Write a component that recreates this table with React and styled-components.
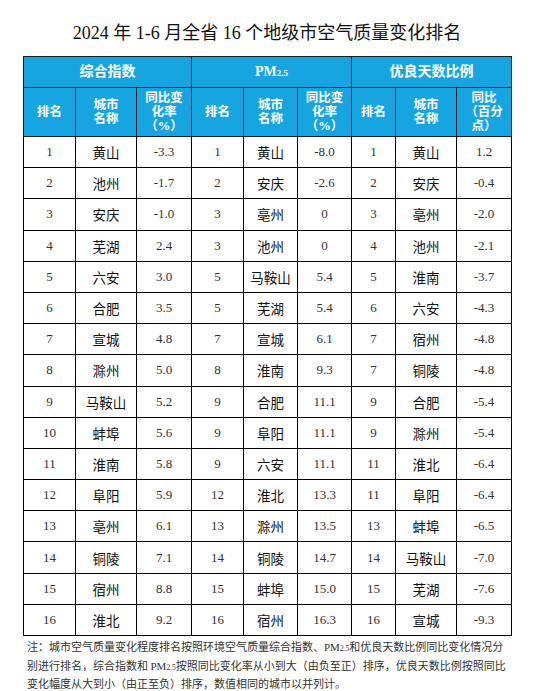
import React from "react";
import styled, { createGlobalStyle } from "styled-components";

const GlobalStyle = createGlobalStyle`
  body {
    margin: 0;
    background: #fff;
    font-family: "Liberation Serif", "Noto Sans CJK SC", serif;
  }
`;

const Page = styled.div`
  width: 537px;
  padding: 21px 0 0 23px;
  box-sizing: border-box;
`;

const Title = styled.h1`
  width: 488px;
  margin: 0 0 11px;
  font-family: "Liberation Serif", "Noto Sans CJK SC", serif;
  font-size: 18px;
  line-height: 24px;
  font-weight: normal;
  color: #111;
  text-align: center;
`;

const Table = styled.table`
  width: 488px;
  border-collapse: collapse;
  table-layout: fixed;
  border: 1px solid #000;
`;

const HeadRow = styled.tr`
  height: ${(p) => p.$h}px;
`;

const Th = styled.th`
  background: #17a5e2;
  color: #fff;
  border: 1px solid #0f1f2a;
  padding: 0;
  font-family: "Liberation Serif", "Noto Sans CJK SC", serif;
  font-weight: bold;
  font-size: ${(p) => (p.$group ? 14 : 12.5)}px;
  line-height: 14px;
  text-align: center;
  vertical-align: middle;
`;

const Sub = styled.span`
  font-size: 9px;
`;

const Row = styled.tr`
  height: 31.2px;
`;

const Td = styled.td`
  border: 1px solid #000;
  padding: 0;
  text-align: center;
  vertical-align: middle;
  color: ${(p) => (p.$city ? "#111" : "#333")};
  font-family: ${(p) =>
    p.$city
      ? '"Noto Sans CJK SC", sans-serif'
      : '"Liberation Serif", "Noto Sans CJK SC", serif'};
  font-size: ${(p) => (p.$city ? 13.5 : 13)}px;
`;

const Note = styled.div`
  display: flex;
  flex-direction: column;
  margin: 1px 0 0 4px;
  font-family: "Noto Sans CJK SC", sans-serif;
  font-size: 11px;
  color: #333;
`;

const NoteLine = styled.div`
  height: 18.5px;
  line-height: 18.5px;
  white-space: nowrap;
`;

const NoteSub = styled.span`
  font-family: "Liberation Serif", serif;
  font-size: 7.5px;
  line-height: 0;
`;

const Pm = styled.span`
  font-family: "Liberation Serif", serif;
  line-height: 0;
`;

const composite = [
  [1, "黄山", "-3.3"], [2, "池州", "-1.7"], [3, "安庆", "-1.0"], [4, "芜湖", "2.4"],
  [5, "六安", "3.0"], [6, "合肥", "3.5"], [7, "宣城", "4.8"], [8, "滁州", "5.0"],
  [9, "马鞍山", "5.2"], [10, "蚌埠", "5.6"], [11, "淮南", "5.8"], [12, "阜阳", "5.9"],
  [13, "亳州", "6.1"], [14, "铜陵", "7.1"], [15, "宿州", "8.8"], [16, "淮北", "9.2"],
];

const pm25 = [
  [1, "黄山", "-8.0"], [2, "安庆", "-2.6"], [3, "亳州", "0"], [3, "池州", "0"],
  [5, "马鞍山", "5.4"], [5, "芜湖", "5.4"], [7, "宣城", "6.1"], [8, "淮南", "9.3"],
  [9, "合肥", "11.1"], [9, "阜阳", "11.1"], [9, "六安", "11.1"], [12, "淮北", "13.3"],
  [13, "滁州", "13.5"], [14, "铜陵", "14.7"], [15, "蚌埠", "15.0"], [16, "宿州", "16.3"],
];

const goodDays = [
  [1, "黄山", "1.2"], [2, "安庆", "-0.4"], [3, "亳州", "-2.0"], [4, "池州", "-2.1"],
  [5, "淮南", "-3.7"], [6, "六安", "-4.3"], [7, "宿州", "-4.8"], [7, "铜陵", "-4.8"],
  [9, "合肥", "-5.4"], [9, "滁州", "-5.4"], [11, "淮北", "-6.4"], [11, "阜阳", "-6.4"],
  [13, "蚌埠", "-6.5"], [14, "马鞍山", "-7.0"], [15, "芜湖", "-7.6"], [16, "宣城", "-9.3"],
];

const widths = [52, 61, 55, 52, 54, 54, 44, 61, 55];

const SubHeads = ({ last }) => (
  <>
    <Th>排名</Th>
    <Th>
      城市
      <br />
      名称
    </Th>
    {last ? (
      <Th>
        同比
        <br />
        （百分
        <br />
        点）
      </Th>
    ) : (
      <Th>
        同比变
        <br />
        化率
        <br />
        （%）
      </Th>
    )}
  </>
);

const App = () => {
  return (
    <Page>
      <GlobalStyle />
      <Title>2024 年 1-6 月全省 16 个地级市空气质量变化排名</Title>
      <Table>
        <colgroup>
          {widths.map((w, i) => (
            <col key={i} style={{ width: w }} />
          ))}
        </colgroup>
        <thead>
          <HeadRow $h={31}>
            <Th $group colSpan={3}>综合指数</Th>
            <Th $group colSpan={3}>
              PM<Sub>2.5</Sub>
            </Th>
            <Th $group colSpan={3}>优良天数比例</Th>
          </HeadRow>
          <HeadRow $h={49}>
            <SubHeads />
            <SubHeads />
            <SubHeads last />
          </HeadRow>
        </thead>
        <tbody>
          {composite.map((row, i) => (
            <Row key={i}>
              {[row, pm25[i], goodDays[i]].map((r, j) => (
                <React.Fragment key={j}>
                  <Td>{r[0]}</Td>
                  <Td $city>{r[1]}</Td>
                  <Td>{r[2]}</Td>
                </React.Fragment>
              ))}
            </Row>
          ))}
        </tbody>
      </Table>
      <Note>
        <NoteLine>
          注：城市空气质量变化程度排名按照环境空气质量综合指数、<Pm>PM</Pm>
          <NoteSub>2.5</NoteSub>和优良天数比例同比变化情况分
        </NoteLine>
        <NoteLine>
          别进行排名，综合指数和 <Pm>PM</Pm>
          <NoteSub>2.5</NoteSub>按照同比变化率从小到大（由负至正）排序，优良天数比例按照同比
        </NoteLine>
        <NoteLine>变化幅度从大到小（由正至负）排序，数值相同的城市以并列计。</NoteLine>
      </Note>
    </Page>
  );
};

export default App;
